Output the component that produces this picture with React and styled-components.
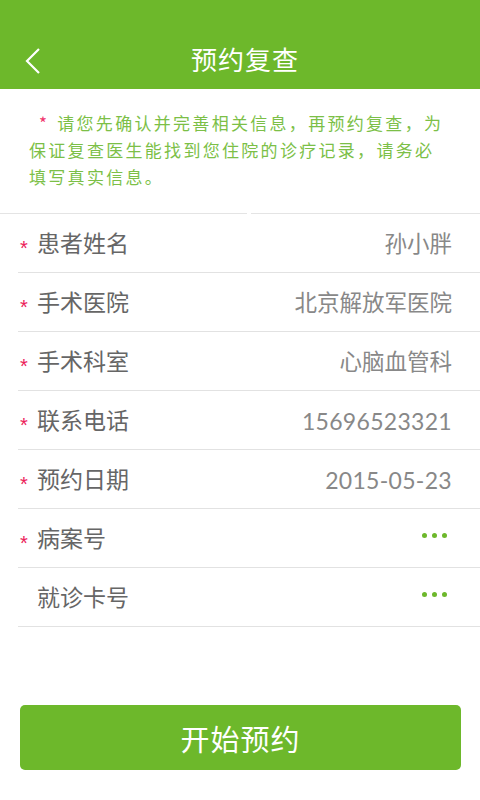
import React from "react";
import styled, { createGlobalStyle } from "styled-components";

const Global = createGlobalStyle`
  html, body { margin: 0; padding: 0; background: #fff; }
  body { font-family: "Noto Sans CJK SC", "Noto Sans", sans-serif; }
  * { box-sizing: border-box; }
`;

const GREEN = "#6db82b";

const Page = styled.div`
  width: 480px;
  min-height: 800px;
  display: flex;
  flex-direction: column;
  background: #fff;
`;

const Header = styled.header`
  height: 89px;
  background: ${GREEN};
  display: grid;
  grid-template-columns: 60px 1fr 60px;
  align-items: end;
  padding-bottom: 12px;
`;

const BackBtn = styled.button`
  border: none;
  background: none;
  padding: 0 0 0 24px;
  height: 32px;
  display: flex;
  align-items: center;
  cursor: pointer;
`;

const Title = styled.h1`
  margin: 0;
  padding-left: 10px;
  text-align: center;
  color: #fff;
  font-size: 26px;
  font-weight: 400;
  line-height: 36px;
  letter-spacing: 1px;
`;

const Notice = styled.p`
  margin: 0;
  padding: 20px 24px 0 29px;
  height: 124px;
  color: #7cbf47;
  font-size: 17px;
  line-height: 27px;
  letter-spacing: 2.3px;
`;

const NoticeStar = styled.span`
  color: #f0336b;
  display: inline-block;
  padding-left: 10px;
  margin-right: 8px;
`;

const Divider = styled.div`
  display: flex;
  gap: 4px;
  height: 1px;
`;

const DividerSeg = styled.div`
  flex: ${(p) => (p.$w ? `0 0 ${p.$w}px` : "1")};
  background: #e4e4e4;
`;

const List = styled.div`
  margin-left: 18px;
  display: flex;
  flex-direction: column;
`;

const Row = styled.div`
  height: 59px;
  border-bottom: 1px solid #e2e2e2;
  display: flex;
  align-items: center;
  padding-right: 28px;
`;

const Star = styled.span`
  width: 19px;
  color: ${(p) => (p.$hidden ? "transparent" : "#ec1c5a")};
  font-size: 20px;
  font-family: "Liberation Sans", sans-serif;
  line-height: 1;
  padding-top: 10px;
  padding-left: 2px;
`;

const Label = styled.span`
  font-size: 23px;
  color: #666;
  flex: 1;
  line-height: 1;
  padding-bottom: 2px;
`;

const Value = styled.span`
  font-size: ${(p) => (p.$num ? "23px" : "22.5px")};
  letter-spacing: ${(p) => (p.$num ? "0.3px" : "0")};
  color: #888;
  font-family: Lato, "Noto Sans CJK SC", sans-serif;
  line-height: 1;
  padding-top: 2px;
`;

const Dots = styled.span`
  display: flex;
  gap: 5px;
  margin-right: 5px;
  margin-bottom: 5px;
`;

const Dot = styled.span`
  width: 5px;
  height: 5px;
  border-radius: 50%;
  background: ${GREEN};
`;

const Footer = styled.div`
  margin-top: 78px;
  padding: 0 19px 0 20px;
`;

const Submit = styled.button`
  width: 100%;
  height: 65px;
  border: none;
  border-radius: 5px;
  background: ${GREEN};
  color: #fff;
  font-family: "Noto Sans CJK SC", sans-serif;
  font-size: 29px;
  letter-spacing: 1px;
  cursor: pointer;
`;

const rows = [
  { label: "患者姓名", value: "孙小胖", req: true },
  { label: "手术医院", value: "北京解放军医院", req: true },
  { label: "手术科室", value: "心脑血管科", req: true },
  { label: "联系电话", value: "15696523321", req: true, num: true },
  { label: "预约日期", value: "2015-05-23", req: true, num: true },
  { label: "病案号", dots: true, req: true },
  { label: "就诊卡号", dots: true, req: false },
];

export default function App() {
  return (
    <Page>
      <Global />
      <Header>
        <BackBtn aria-label="返回">
          <svg width="18" height="28" viewBox="0 0 18 28">
            <path d="M15 2 L3 14 L15 26" fill="none" stroke="#fff" strokeWidth="2.2" />
          </svg>
        </BackBtn>
        <Title>预约复查</Title>
        <span />
      </Header>
      <Notice>
        <NoticeStar>*</NoticeStar>请您先确认并完善相关信息，再预约复查，为
        <br />
        保证复查医生能找到您住院的诊疗记录，请务必
        <br />
        填写真实信息。
      </Notice>
      <Divider>
        <DividerSeg $w={247} />
        <DividerSeg />
      </Divider>
      <List>
        {rows.map((r) => (
          <Row key={r.label}>
            <Star $hidden={!r.req}>*</Star>
            <Label>{r.label}</Label>
            {r.dots ? (
              <Dots>
                <Dot />
                <Dot />
                <Dot />
              </Dots>
            ) : (
              <Value $num={r.num}>{r.value}</Value>
            )}
          </Row>
        ))}
      </List>
      <Footer>
        <Submit>开始预约</Submit>
      </Footer>
    </Page>
  );
}
